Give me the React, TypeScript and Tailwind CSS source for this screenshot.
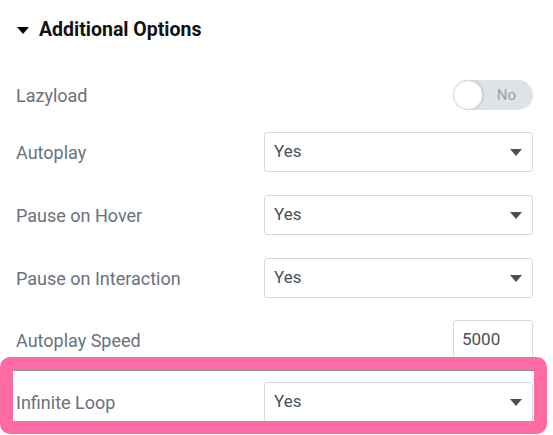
const Caret = ({ className }: { className?: string }) => (
  <svg className={className} viewBox="0 0 12 7" fill="currentColor">
    <path d="M0 0h12L6 7z" />
  </svg>
)

const SelectBox = ({ value }: { value: string }) => (
  <div className="w-[269px] h-10 flex items-center justify-between pl-[9px] pr-[10px] border border-[#d5dadf] rounded-[3px] bg-white">
    <span className="text-[17px] text-[#495157]">{value}</span>
    <Caret className="w-[12px] h-[7px] text-[#495157]" />
  </div>
)

const Row = ({ label, children, className }: { label: string; children: React.ReactNode; className?: string }) => (
  <div className={`flex items-center justify-between ${className ?? ''}`}>
    <span className="text-[18px] text-[#69727d]">{label}</span>
    {children}
  </div>
)

export default function App() {
  return (
    <div
      className="relative w-[553px] h-[435px] bg-white overflow-hidden"
      style={{ fontFamily: 'Roboto, "Liberation Sans", sans-serif' }}
    >
      <div className="pl-4 pr-5 pt-[18px] flex flex-col">
        {/* Section heading */}
        <div className="flex items-center gap-[10px] h-6">
          <Caret className="w-[12px] h-[7px] text-black ml-[1px]" />
          <span className="text-[19.5px] font-bold text-[#111213]">Additional Options</span>
        </div>

        <Row label="Lazyload" className="mt-[38px] h-[30px]">
          <div className="relative w-20 h-[30px] rounded-full bg-[#dfe2e6] flex items-center justify-end pr-[17px]">
            <div className="absolute left-0 top-0 w-[30px] h-[30px] rounded-full bg-white border border-[#d5dadf] shadow-[1px_0_2px_rgba(0,0,0,0.12)]" />
            <span className="text-[15px] text-[#9aa1a9]">No</span>
          </div>
        </Row>

        <Row label="Autoplay" className="mt-[22px] h-10">
          <SelectBox value="Yes" />
        </Row>

        <Row label="Pause on Hover" className="mt-[23px] h-10">
          <SelectBox value="Yes" />
        </Row>

        <Row label="Pause on Interaction" className="mt-[23px] h-10">
          <SelectBox value="Yes" />
        </Row>

        <Row label="Autoplay Speed" className="mt-[22px] h-10">
          <div className="w-20 h-10 flex items-center pl-[8px] border border-[#d5dadf] rounded-[3px]">
            <span className="text-[17px] text-[#495157]">5000</span>
          </div>
        </Row>

        <Row label="Infinite Loop" className="mt-[22px] h-10">
          <SelectBox value="Yes" />
        </Row>
      </div>

      {/* Highlight annotation */}
      <div className="absolute left-0 top-[357px] w-[547px] h-[77px] border-[13px] border-[#fe6aa3] rounded-[10px] pointer-events-none">
        <div className="h-px bg-[#8e9195]" />
      </div>
    </div>
  )
}
